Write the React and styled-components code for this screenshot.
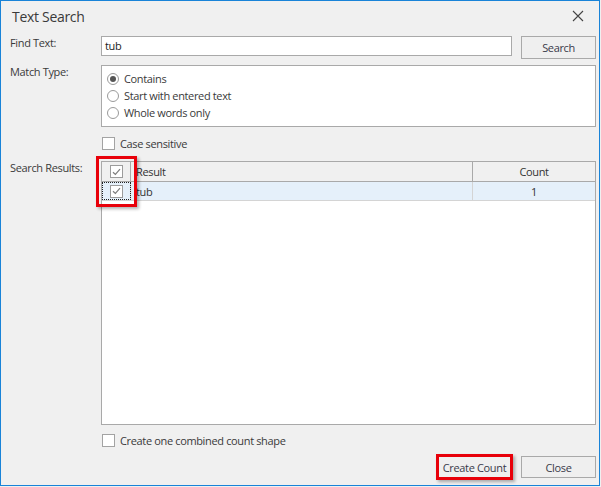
import React from "react";
import styled, { createGlobalStyle } from "styled-components";

const FONT = `"Open Sans", "Noto Sans", "Liberation Sans", sans-serif`;

const GlobalStyle = createGlobalStyle`
  html, body {
    margin: 0;
    padding: 0;
    background: #f0f0f0;
  }
  body {
    font-family: ${FONT};
    font-size: 11px;
    letter-spacing: -0.35px;
    color: #333;
  }
`;

const RESULTS = [{ text: "tub", count: 1, checked: true }];

const MATCH_TYPES = ["Contains", "Start with entered text", "Whole words only"];

const Window = styled.div`
  width: 600px;
  height: 486px;
  box-sizing: border-box;
  border: 1px solid #1983d8;
  background: #f0f0f0;
  display: flex;
  flex-direction: column;
`;

const TitleBar = styled.div`
  height: 29px;
  display: flex;
  align-items: center;
  justify-content: space-between;
  padding: 0 15px 0 11px;
`;

const Title = styled.div`
  font-size: 14px;
  letter-spacing: -0.3px;
  color: #3a3a3a;
  margin-top: 2px;
`;

const CloseIcon = styled.svg`
  width: 12px;
  height: 12px;
  display: block;
  margin-top: 1px;
`;

const Body = styled.div`
  padding: 6px 3px 0 9px;
  display: grid;
  grid-template-columns: 91px 1fr;
  align-items: start;
`;

const Label = styled.div`
  line-height: 14px;
  color: #3a3a3a;
  margin-top: ${(p) => p.$top || 0}px;
`;

const Cell = styled.div`
  margin-top: ${(p) => p.$top || 0}px;
  position: relative;
`;

const FindRow = styled.div`
  display: flex;
  gap: 9px;
`;

const TextInput = styled.div`
  flex: 1;
  height: 20px;
  box-sizing: border-box;
  border: 1px solid #a9a9a9;
  background: #fff;
  padding: 0 3px;
  line-height: 18px;
  color: #222;
`;

const Button = styled.div`
  width: ${(p) => p.$w || 75}px;
  height: ${(p) => p.$h || 23}px;
  box-sizing: border-box;
  border: ${(p) => (p.$flag ? "3px solid #e8000a" : "1px solid #a9a9a9")};
  box-shadow: ${(p) => (p.$flag ? "2px 2px 3px rgba(0,0,0,0.3)" : "none")};
  background: #efefef;
  display: flex;
  align-items: center;
  justify-content: center;
  color: #3a3a4a;
`;

const MatchBox = styled.div`
  height: 62px;
  box-sizing: border-box;
  border: 1px solid #a9a9a9;
  background: #fff;
  padding: 4px 5px;
`;

const Option = styled.div`
  display: flex;
  align-items: center;
  gap: 5px;
  height: 17px;
  color: #3a3a3a;
`;

const Radio = styled.span`
  width: 12px;
  height: 12px;
  box-sizing: border-box;
  border-radius: 50%;
  border: 1px solid #9a9a9a;
  background: #fff;
  display: flex;
  align-items: center;
  justify-content: center;

  &::after {
    content: "";
    width: 6px;
    height: 6px;
    border-radius: 50%;
    background: ${(p) => (p.$on ? "#555" : "transparent")};
  }
`;

const CheckRow = styled.label`
  display: flex;
  align-items: center;
  gap: 5px;
  height: 13px;
  margin-left: 1px;
  color: #3a3a3a;
`;

const Box = styled.span`
  width: 13px;
  height: 13px;
  box-sizing: border-box;
  border: 1px solid ${(p) => (p.$muted ? "#9c9c9c" : "#a3a3a3")};
  background: #fff;
  display: flex;
  align-items: center;
  justify-content: center;
`;

const Grid = styled.div`
  height: 264px;
  box-sizing: border-box;
  border: 1px solid #a9a9a9;
  background: #fff;
`;

const GridRow = styled.div`
  display: grid;
  grid-template-columns: 29px 342px 1fr;
  height: ${(p) => (p.$head ? 20 : 19)}px;
  box-sizing: border-box;
  background: ${(p) => (p.$head ? "#f0f0f0" : "#e5f0fa")};
  border-bottom: 1px solid ${(p) => (p.$head ? "#a9a9a9" : "#d4d4d4")};
`;

const GridCell = styled.div`
  display: flex;
  align-items: center;
  justify-content: ${(p) => p.$align || "flex-start"};
  padding: 0 ${(p) => p.$pad ?? 5}px;
  border-right: ${(p) => (p.$divider ? `1px solid ${p.$divider}` : "none")};
  color: #333;
  box-sizing: border-box;
  height: 100%;
`;

const FocusCell = styled(GridCell)`
  outline: 1px dotted #222;
  outline-offset: -1px;
`;

const Highlight = styled.div`
  position: absolute;
  left: -5px;
  top: -5px;
  width: 41px;
  height: 51px;
  box-sizing: border-box;
  border: 3px solid #e8000a;
  box-shadow: 2px 2px 3px rgba(0, 0, 0, 0.3);
  pointer-events: none;
`;

const Footer = styled.div`
  display: flex;
  justify-content: flex-end;
  align-items: center;
  gap: 8px;
  margin-top: 7px;
`;

const Check = ({ muted }) => (
  <Box $muted={muted}>
    {muted && (
      <svg width="9" height="8" viewBox="0 0 9 8">
        <path d="M1 4.2 L3.4 6.5 L8 1.2" fill="none" stroke="#7d7d7d" strokeWidth="1.2" />
      </svg>
    )}
  </Box>
);

export default function App() {
  return (
    <>
      <GlobalStyle />
      <Window>
        <TitleBar>
          <Title>Text Search</Title>
          <CloseIcon viewBox="0 0 12 12">
            <path d="M1 1 L11 11 M11 1 L1 11" stroke="#444" strokeWidth="1.1" />
          </CloseIcon>
        </TitleBar>
        <Body>
          <Label>Find Text:</Label>
          <Cell>
            <FindRow>
              <TextInput>tub</TextInput>
              <Button>Search</Button>
            </FindRow>
          </Cell>

          <Label $top={6}>Match Type:</Label>
          <Cell $top={6}>
            <MatchBox>
              {MATCH_TYPES.map((m, i) => (
                <Option key={m}>
                  <Radio $on={i === 0} />
                  {m}
                </Option>
              ))}
            </MatchBox>
          </Cell>

          <div />
          <Cell $top={10}>
            <CheckRow>
              <Check />
              Case sensitive
            </CheckRow>
          </Cell>

          <Label $top={11}>Search Results:</Label>
          <Cell $top={11}>
            <Grid>
              <GridRow $head>
                <GridCell $align="center" $pad={0} $divider="#a9a9a9">
                  <Check muted />
                </GridCell>
                <GridCell $divider="#a9a9a9">Result</GridCell>
                <GridCell $align="center">Count</GridCell>
              </GridRow>
              {RESULTS.map((r) => (
                <GridRow key={r.text}>
                  <FocusCell $align="center" $pad={0} $divider="#d4d4d4">
                    <Check muted={r.checked} />
                  </FocusCell>
                  <GridCell $divider="#d4d4d4">{r.text}</GridCell>
                  <GridCell $align="center">{r.count}</GridCell>
                </GridRow>
              ))}
            </Grid>
            <Highlight />
          </Cell>

          <div />
          <Cell $top={9}>
            <CheckRow>
              <Check />
              Create one combined count shape
            </CheckRow>
          </Cell>

          <div />
          <Cell>
            <Footer>
              <Button $flag $w={77} $h={26}>
                Create Count
              </Button>
              <Button $h={22}>Close</Button>
            </Footer>
          </Cell>
        </Body>
      </Window>
    </>
  );
}
